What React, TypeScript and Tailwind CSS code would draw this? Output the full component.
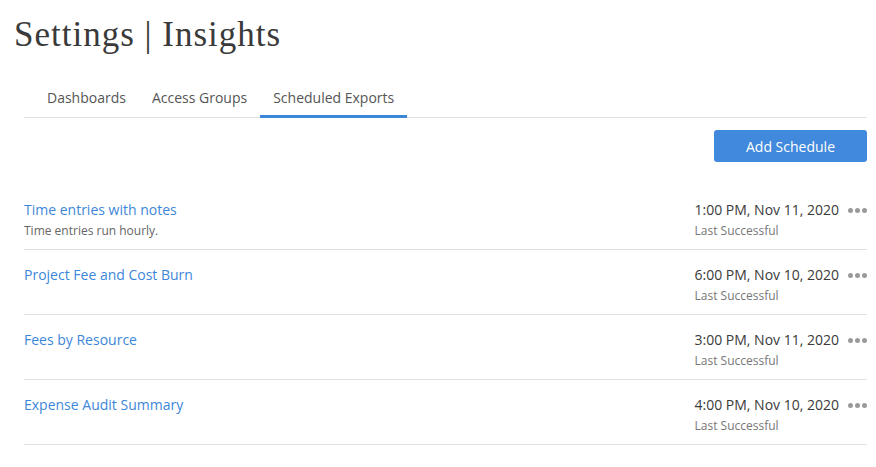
const exports_ = [
  {
    name: "Time entries with notes",
    note: "Time entries run hourly.",
    time: "1:00 PM, Nov 11, 2020",
  },
  { name: "Project Fee and Cost Burn", note: "", time: "6:00 PM, Nov 10, 2020" },
  { name: "Fees by Resource", note: "", time: "3:00 PM, Nov 11, 2020" },
  { name: "Expense Audit Summary", note: "", time: "4:00 PM, Nov 10, 2020" },
];

const tabs = ["Dashboards", "Access Groups", "Scheduled Exports"];

function Dots() {
  return (
    <div className="flex items-center gap-[2px] pt-[1px]">
      <span className="h-[5px] w-[5px] rounded-full bg-[#9a9a9a]" />
      <span className="h-[5px] w-[5px] rounded-full bg-[#9a9a9a]" />
      <span className="h-[5px] w-[5px] rounded-full bg-[#9a9a9a]" />
    </div>
  );
}

export default function App() {
  return (
    <div
      className="min-h-screen bg-white text-[#333]"
      style={{ fontFamily: '"Open Sans", sans-serif' }}
    >
      <h1
        className="pl-[14px] pt-[13px] text-[35px] leading-[44px] tracking-[1px] text-[#3a3a3a]"
        style={{ fontFamily: '"Liberation Serif", serif' }}
      >
        Settings | Insights
      </h1>

      <div className="ml-[24px] mr-[9px] mt-[31px]">
        {/* Tabs */}
        <div className="flex border-b border-[#e2e2e2] pl-[10px]">
          {tabs.map((t) => (
            <div
              key={t}
              className={`px-[13px] pb-[7px] text-[14px] leading-[20px] text-[#555] ${
                t === "Scheduled Exports"
                  ? "border-b-[3px] border-[#3d87d8] mb-[-1px]"
                  : "border-b-[3px] border-transparent mb-[-1px]"
              }`}
            >
              {t}
            </div>
          ))}
        </div>

        <div className="mt-[12px] flex justify-end">
          <button className="h-[32px] w-[153px] rounded-[3px] bg-[#4189dc] text-[14px] text-white">
            Add Schedule
          </button>
        </div>

        {/* Export list */}
        <div className="mt-[23px]">
          {exports_.map((e) => (
            <div
              key={e.name}
              className="flex justify-between border-b border-[#e0e0e0] pt-[15px] pb-[8px]"
            >
              <div>
                <div className="text-[14px] leading-[20px] text-[#3d87d8]">
                  {e.name}
                </div>
                <div className="mt-[1px] text-[12px] leading-[20px] text-[#666]">
                  {e.note}
                </div>
              </div>
              <div className="flex gap-[9px]">
                <div>
                  <div className="text-[14px] leading-[20px] text-[#3a3a3a]">
                    {e.time}
                  </div>
                  <div className="mt-[1px] text-[12px] leading-[20px] text-[#777]">
                    Last Successful
                  </div>
                </div>
                <div className="h-[20px] flex items-center">
                  <Dots />
                </div>
              </div>
            </div>
          ))}
        </div>
      </div>
    </div>
  );
}
